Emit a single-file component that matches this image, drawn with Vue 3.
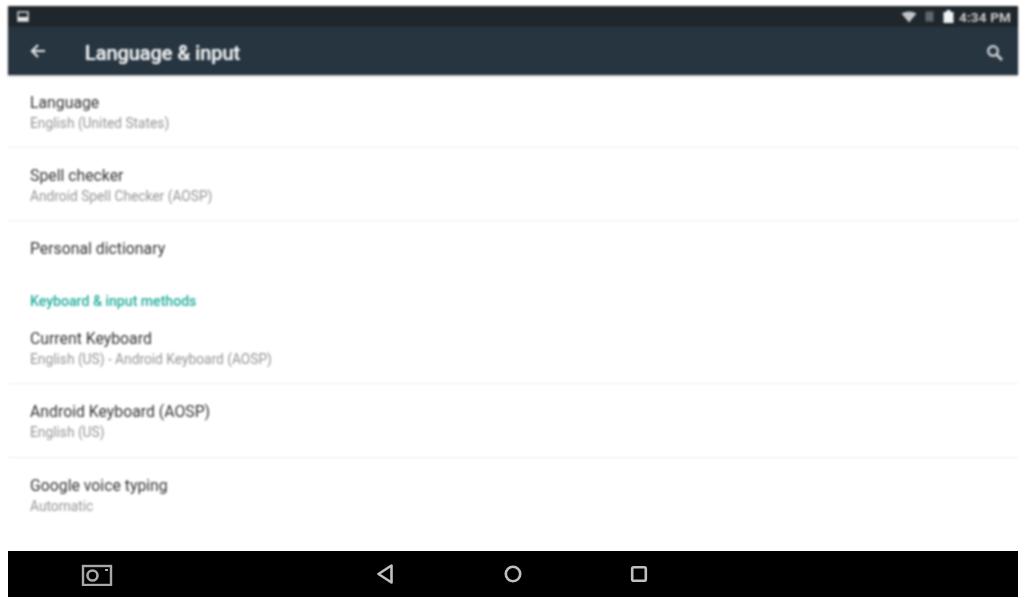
<script setup>
const top = [
  { title: 'Language', sub: 'English (United States)', h: 73, line: true },
  { title: 'Spell checker', sub: 'Android Spell Checker (AOSP)', h: 73, line: true },
  { title: 'Personal dictionary', sub: '', h: 56, line: false },
]
const bottom = [
  { title: 'Current Keyboard', sub: 'English (US) - Android Keyboard (AOSP)', h: 73, line: true },
  { title: 'Android Keyboard (AOSP)', sub: 'English (US)', h: 74, line: true },
  { title: 'Google voice typing', sub: 'Automatic', h: 73, line: false },
]
</script>

<template>
  <div class="screen">
    <header class="appbar">
      <div class="status">
        <svg class="status-left" width="12" height="12" viewBox="0 0 12 12">
          <rect x="1" y="1" width="10" height="9" fill="none" stroke="#c9cdcf" stroke-width="1.6" />
          <rect x="1" y="6" width="10" height="4" fill="#e4e6e7" />
        </svg>
        <div class="status-right">
          <svg class="wifi" width="16" height="12" viewBox="0 0 16 12"><path d="M0.5 2.5 Q8 -1.5 15.5 2.5 L8 11.5Z" fill="#c2c6c9" /></svg>
          <svg class="sim" width="9" height="11" viewBox="0 0 9 11"><rect x="0.5" y="0.5" width="8" height="10" fill="#5f676c" /></svg>
          <svg class="battery" width="11" height="13" viewBox="0 0 11 13"><rect x="3.5" y="0" width="4" height="2" fill="#f2f3f3" /><rect x="0.5" y="2" width="10" height="11" fill="#f2f3f3" /></svg>
          <span class="clock">4:34 PM</span>
        </div>
      </div>
      <div class="toolbar">
        <svg class="back" width="18" height="16" viewBox="0 0 18 16">
          <path d="M16 8H3M9 2 3 8l6 6" fill="none" stroke="#e3e6e7" stroke-width="2.2" />
        </svg>
        <h1 class="heading">Language &amp; input</h1>
        <svg class="search" width="18" height="18" viewBox="0 0 18 18">
          <circle cx="7" cy="7" r="4.8" fill="none" stroke="#c9cdcf" stroke-width="2.4" />
          <path d="M10.5 10.5 16 16" stroke="#c9cdcf" stroke-width="2.8" />
        </svg>
      </div>
    </header>

    <main class="list">
      <div v-for="row in top" :key="row.title" class="row" :class="{ ruled: row.line }" :style="{ height: row.h + 'px' }">
        <div class="title">{{ row.title }}</div>
        <div v-if="row.sub" class="sub">{{ row.sub }}</div>
      </div>
      <div class="section">Keyboard &amp; input methods</div>
      <div v-for="row in bottom" :key="row.title" class="row" :class="{ ruled: row.line }" :style="{ height: row.h + 'px' }">
        <div class="title">{{ row.title }}</div>
        <div v-if="row.sub" class="sub">{{ row.sub }}</div>
      </div>
    </main>

    <footer class="nav">
      <svg class="camera" width="32" height="24" viewBox="0 0 32 24">
        <rect x="2" y="4" width="28" height="19" fill="none" stroke="#a8a8a8" stroke-width="2.4" />
        <circle cx="11.5" cy="13.5" r="5" fill="none" stroke="#a8a8a8" stroke-width="2.6" />
        <path d="M24 8h3" stroke="#a8a8a8" stroke-width="2" fill="none" />
      </svg>
      <svg class="tri" width="18" height="22" viewBox="0 0 18 22">
        <path d="M15.5 2.5V19.5L2.5 11Z" fill="none" stroke="#c0c0c0" stroke-width="2.6" stroke-linejoin="round" />
      </svg>
      <svg class="circle" width="20" height="20" viewBox="0 0 20 20">
        <circle cx="10" cy="10" r="7.2" fill="none" stroke="#c0c0c0" stroke-width="2.6" />
      </svg>
      <svg class="square" width="18" height="18" viewBox="0 0 18 18">
        <rect x="2.2" y="2.2" width="13.6" height="13.6" rx="1.5" fill="none" stroke="#c0c0c0" stroke-width="2.6" />
      </svg>
    </footer>
  </div>
</template>

<style scoped>
.screen {
  width: 1021px;
  height: 598px;
  background: #fff;
  display: flex;
  flex-direction: column;
  padding: 6px 3px 1px 8px;
  box-sizing: border-box;
  overflow: hidden;
  font-family: Roboto, "Liberation Sans", sans-serif;
}
.appbar {
  height: 69px;
  flex: none;
  background: linear-gradient(#20272c 0, #20272c 21px, #273541 21px);
  box-shadow: 0 1px 2px rgba(0, 0, 0, 0.3);
  color: #dfe2e4;
  filter: blur(0.9px);
}
.status {
  height: 21px;
  display: flex;
  align-items: center;
  justify-content: space-between;
  padding: 0 7px 0 9px;
}
.status-right {
  display: flex;
  align-items: center;
}
.sim { margin-left: 8px; }
.battery { margin-left: 9px; }
.clock {
  margin-left: 5px;
  font-size: 13.6px;
  letter-spacing: 0.1px;
  font-weight: 700;
  color: #c6cacc;
}
.toolbar {
  height: 48px;
  box-sizing: border-box;
  display: flex;
  align-items: center;
  padding: 2px 14px 0 21px;
}
.back { margin-bottom: 2px; }
.heading {
  margin: 2px 0 0 38px;
  font-size: 19.9px;
  font-weight: 500;
  color: #eceff0;
  text-shadow: 0 0 1px #eceff0;
  flex: 1;
}
.search { margin-top: 1px; }
.list {
  flex: 1;
  min-height: 0;
  filter: blur(0.9px);
}
.row {
  box-sizing: border-box;
  padding: 18px 0 0 22px;
}
.ruled {
  border-bottom: 1px solid #ececec;
}
.title {
  font-size: 15.8px;
  line-height: 20px;
  color: #333;
}
.sub {
  font-size: 13.75px;
  line-height: 20px;
  color: #959595;
}
.section {
  height: 34px;
  box-sizing: border-box;
  padding: 15px 0 0 22px;
  font-size: 14.1px;
  line-height: 18px;
  font-weight: 500;
  color: #22ad9b;
}
.nav {
  height: 46px;
  flex: none;
  background: #000;
  display: flex;
  align-items: center;
  padding-left: 73px;
  filter: blur(0.6px);
}
.tri { margin-left: 263px; }
.circle { margin-left: 109px; }
.square { margin-left: 107px; }
</style>
